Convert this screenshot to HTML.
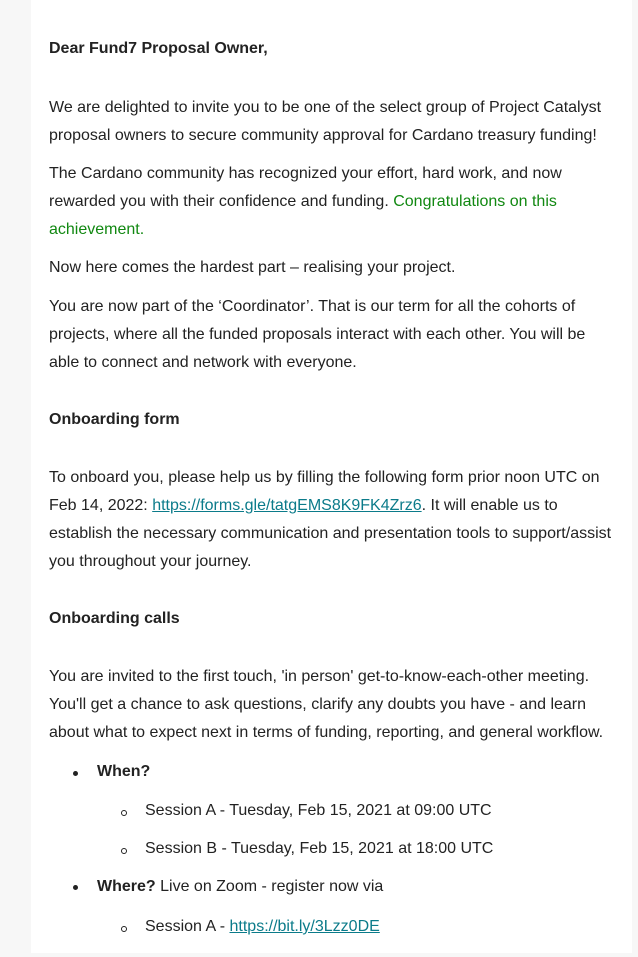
<!DOCTYPE html>
<html><head><meta charset="utf-8"><style>
body{margin:0;width:638px;height:957px;background:#f7f7f7;position:relative;overflow:hidden;font-family:"Liberation Sans",Arial,sans-serif;font-size:16px;color:#222}
.panel{position:absolute;left:31px;top:0;width:601px;height:953px;background:#fff}
.l{position:absolute;left:49px;white-space:nowrap;line-height:28px;height:28px}
b{font-weight:bold}
.g{color:#118811}
a{color:#0b7b8a;text-decoration:underline}
.dot{position:absolute;width:5px;height:5px;border-radius:50%;background:#222}
.circ{position:absolute;width:4px;height:4px;border-radius:50%;border:1px solid #222}
</style></head><body>
<div class="panel"></div>
<div class="l" style="top:35px"><b>Dear Fund7 Proposal Owner,</b></div>
<div class="l" style="top:94px">We are delighted to invite you to be one of the select group of Project Catalyst</div>
<div class="l" style="top:122px">proposal owners to secure community approval for Cardano treasury funding!</div>
<div class="l" style="top:160px">The Cardano community has recognized your effort, hard work, and now</div>
<div class="l" style="top:188px">rewarded you with their confidence and funding. <span class="g">Congratulations on this</span></div>
<div class="l g" style="top:216px">achievement.</div>
<div class="l" style="top:254px">Now here comes the hardest part – realising your project.</div>
<div class="l" style="top:293px">You are now part of the ‘Coordinator’. That is our term for all the cohorts of</div>
<div class="l" style="top:321px">projects, where all the funded proposals interact with each other. You will be</div>
<div class="l" style="top:349px">able to connect and network with everyone.</div>
<div class="l" style="top:406px"><b>Onboarding form</b></div>
<div class="l" style="top:464px">To onboard you, please help us by filling the following form prior noon UTC on</div>
<div class="l" style="top:492px">Feb 14, 2022: <a>https://forms.gle/tatgEMS8K9FK4Zrz6</a>. It will enable us to</div>
<div class="l" style="top:520px">establish the necessary communication and presentation tools to support/assist</div>
<div class="l" style="top:548px">you throughout your journey.</div>
<div class="l" style="top:605px"><b>Onboarding calls</b></div>
<div class="l" style="top:663px">You are invited to the first touch, 'in person' get-to-know-each-other meeting.</div>
<div class="l" style="top:691px">You'll get a chance to ask questions, clarify any doubts you have - and learn</div>
<div class="l" style="top:719px">about what to expect next in terms of funding, reporting, and general workflow.</div>
<div class="dot" style="left:73px;top:771px"></div>
<div class="l" style="top:758px;left:97px"><b>When?</b></div>
<div class="circ" style="left:121px;top:810px"></div>
<div class="l" style="top:797px;left:145px">Session A - Tuesday, Feb 15, 2021 at 09:00 UTC</div>
<div class="circ" style="left:121px;top:848px"></div>
<div class="l" style="top:835px;left:145px">Session B - Tuesday, Feb 15, 2021 at 18:00 UTC</div>
<div class="dot" style="left:73px;top:885px"></div>
<div class="l" style="top:873px;left:97px"><b>Where?</b> Live on Zoom - register now via</div>
<div class="circ" style="left:121px;top:926px"></div>
<div class="l" style="top:913px;left:145px">Session A - <a>https://bit.ly/3Lzz0DE</a></div>
</body></html>
